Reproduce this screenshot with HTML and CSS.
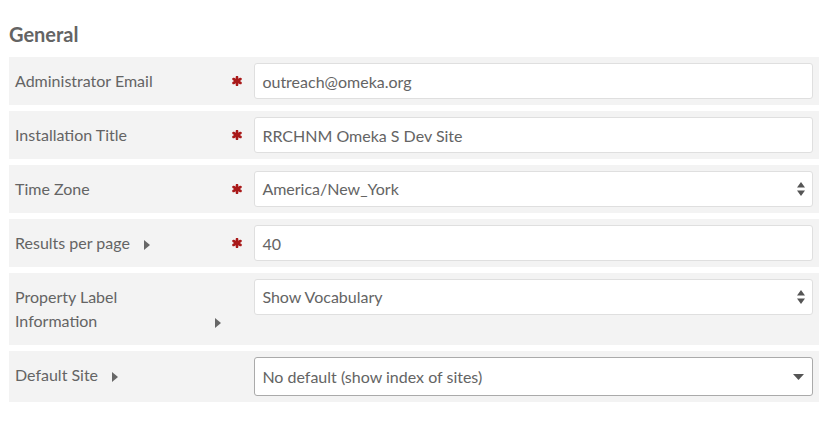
FILE: index.html
```html
<!DOCTYPE html>
<html>
<head>
<meta charset="utf-8">
<link rel="stylesheet" href="styles.css">
</head>
<body>
<fieldset class="section">
  <legend class="section-title">General</legend>

  <div class="field">
    <div class="field-meta">
      <label class="field-label">Administrator Email</label>
      <span class="required"><svg width="10" height="10" viewBox="0 0 10 10"><g stroke="#a91919" stroke-width="2.6" stroke-linecap="round"><line x1="5" y1="1" x2="5" y2="9"/><line x1="1.5" y1="3" x2="8.5" y2="7"/><line x1="1.5" y1="7" x2="8.5" y2="3"/></g></svg></span>
    </div>
    <div class="inputs"><input class="text-input" type="text" value="outreach@omeka.org"></div>
  </div>

  <div class="field">
    <div class="field-meta">
      <label class="field-label">Installation Title</label>
      <span class="required"><svg width="10" height="10" viewBox="0 0 10 10"><g stroke="#a91919" stroke-width="2.6" stroke-linecap="round"><line x1="5" y1="1" x2="5" y2="9"/><line x1="1.5" y1="3" x2="8.5" y2="7"/><line x1="1.5" y1="7" x2="8.5" y2="3"/></g></svg></span>
    </div>
    <div class="inputs"><input class="text-input" type="text" value="RRCHNM Omeka S Dev Site"></div>
  </div>

  <div class="field">
    <div class="field-meta">
      <label class="field-label">Time Zone</label>
      <span class="required"><svg width="10" height="10" viewBox="0 0 10 10"><g stroke="#a91919" stroke-width="2.6" stroke-linecap="round"><line x1="5" y1="1" x2="5" y2="9"/><line x1="1.5" y1="3" x2="8.5" y2="7"/><line x1="1.5" y1="7" x2="8.5" y2="3"/></g></svg></span>
    </div>
    <div class="inputs">
      <div class="select">
        <span class="select-value">America/New_York</span>
        <svg class="updown" width="8" height="14" viewBox="0 0 8 14"><path d="M4 0 L8 5.5 L0 5.5 Z M0 8.5 L8 8.5 L4 14 Z" fill="#555"/></svg>
      </div>
    </div>
  </div>

  <div class="field">
    <div class="field-meta">
      <label class="field-label">Results per page</label><span class="expand"><svg width="6" height="10" viewBox="0 0 6 10"><path d="M0 0 L6 5 L0 10 Z" fill="#676767"/></svg></span>
      <span class="required"><svg width="10" height="10" viewBox="0 0 10 10"><g stroke="#a91919" stroke-width="2.6" stroke-linecap="round"><line x1="5" y1="1" x2="5" y2="9"/><line x1="1.5" y1="3" x2="8.5" y2="7"/><line x1="1.5" y1="7" x2="8.5" y2="3"/></g></svg></span>
    </div>
    <div class="inputs"><input class="text-input" type="text" value="40"></div>
  </div>

  <div class="field">
    <div class="field-meta">
      <label class="field-label">Property Label Information</label><span class="expand"><svg width="6" height="10" viewBox="0 0 6 10"><path d="M0 0 L6 5 L0 10 Z" fill="#676767"/></svg></span>
    </div>
    <div class="inputs">
      <div class="select">
        <span class="select-value">Show Vocabulary</span>
        <svg class="updown" width="8" height="14" viewBox="0 0 8 14"><path d="M4 0 L8 5.5 L0 5.5 Z M0 8.5 L8 8.5 L4 14 Z" fill="#555"/></svg>
      </div>
    </div>
  </div>

  <div class="field">
    <div class="field-meta">
      <label class="field-label">Default Site</label><span class="expand"><svg width="6" height="10" viewBox="0 0 6 10"><path d="M0 0 L6 5 L0 10 Z" fill="#676767"/></svg></span>
    </div>
    <div class="inputs">
      <div class="select select-dark">
        <span class="select-value">No default (show index of sites)</span>
        <svg class="down" width="11" height="6" viewBox="0 0 11 6"><path d="M0 0 L11 0 L5.5 6 Z" fill="#555"/></svg>
      </div>
    </div>
  </div>
</fieldset>
</body>
</html>
```

FILE: styles.css
```css
* { box-sizing: border-box; }

html, body {
  margin: 0;
  padding: 0;
  background: #ffffff;
}

body {
  font-family: Lato, "Open Sans", sans-serif;
  font-size: 16px;
  color: #646464;
  padding: 0 6px 0 9px;
}

.section {
  border: 0;
  margin: 0;
  padding: 0;
  min-width: 0;
}

.section-title {
  display: block;
  font-size: 20px;
  font-weight: 700;
  line-height: 24px;
  color: #646464;
  margin: 0;
  padding: 22px 0 11px 0;
}

.field {
  display: flex;
  align-items: flex-start;
  background: #f3f3f3;
  padding: 6px;
  margin-bottom: 6px;
}

.field-meta {
  flex: 0 0 30%;
  position: relative;
  align-self: stretch;
}

.field-label {
  display: inline-block;
  max-width: 186px;
  padding: 6px 0;
  line-height: 24px;
  vertical-align: baseline;
}

.expand {
  display: inline-block;
  margin-left: 14px;
}

.expand svg {
  display: inline-block;
  vertical-align: -1px;
}

.required {
  position: absolute;
  right: 12px;
  top: 13px;
  width: 10px;
  height: 10px;
}

.required svg {
  display: block;
}

.inputs {
  flex: 0 0 70%;
}

.text-input {
  display: block;
  width: 100%;
  height: 36px;
  margin: 0;
  padding: 0 7px;
  border: 1px solid #dfdfdf;
  border-radius: 3px;
  background: #fff;
  font-family: Lato, "Open Sans", sans-serif;
  font-size: 16px;
  color: #646464;
  outline: none;
}

.select {
  position: relative;
  display: flex;
  align-items: center;
  height: 36px;
  padding: 0 7px;
  border: 1px solid #dfdfdf;
  border-radius: 3px;
  background: #fff;
}

.select-value {
  flex: 1;
  line-height: 24px;
}

.updown {
  display: block;
  margin-right: 0;
}

.select-dark {
  height: 39px;
  border-color: #aaaaaa;
}

.down {
  display: block;
  margin-right: 1px;
}
```
